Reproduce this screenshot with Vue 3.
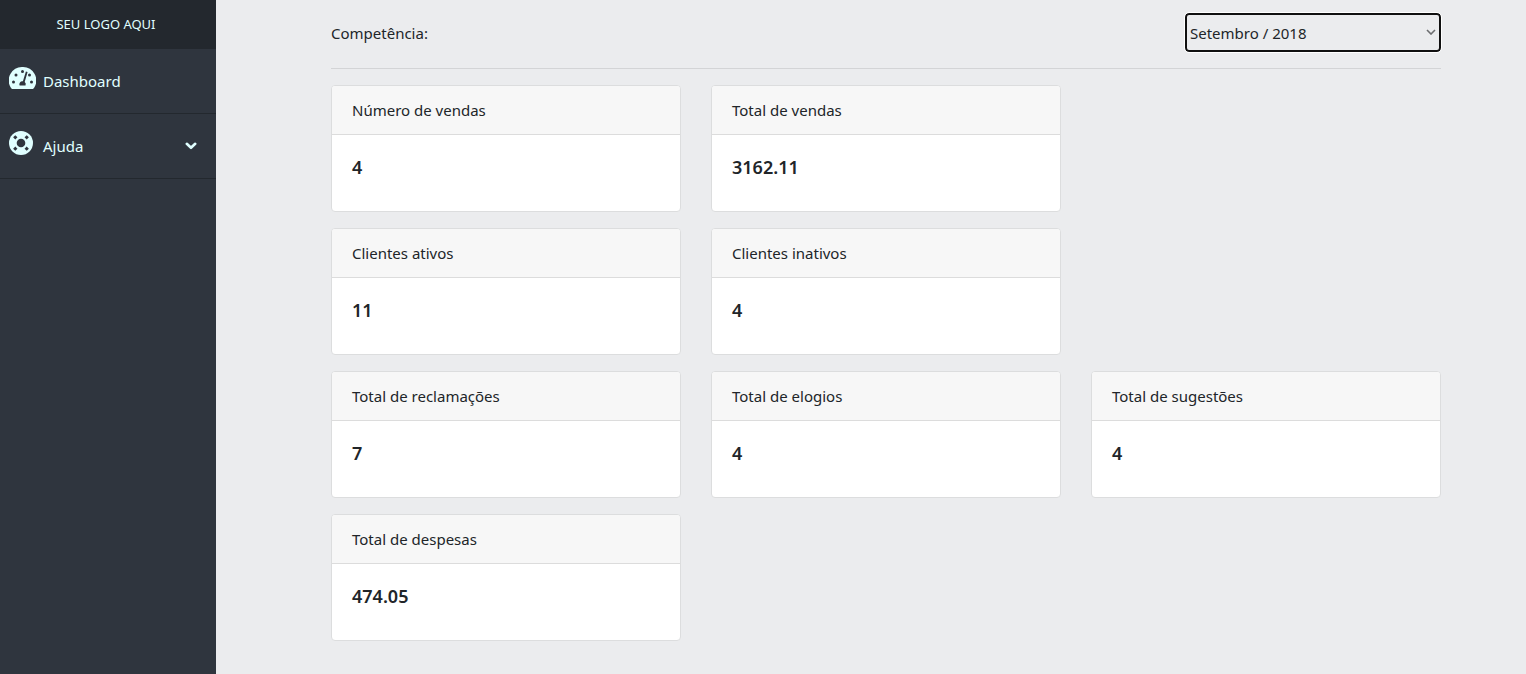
<script setup>
import { ref } from 'vue'

const period = ref('2018-09')
const periods = [{ value: '2018-09', label: 'Setembro / 2018' }]

const rows = [
  [
    { title: 'Número de vendas', value: '4' },
    { title: 'Total de vendas', value: '3162.11' }
  ],
  [
    { title: 'Clientes ativos', value: '11' },
    { title: 'Clientes inativos', value: '4' }
  ],
  [
    { title: 'Total de reclamações', value: '7' },
    { title: 'Total de elogios', value: '4' },
    { title: 'Total de sugestões', value: '4' }
  ],
  [{ title: 'Total de despesas', value: '474.05' }]
]
</script>

<template>
  <div class="layout">
    <aside class="sidebar">
      <div class="brand">SEU LOGO AQUI</div>
      <nav>
        <a class="item" href="#dashboard">
          <svg class="gauge" viewBox="0 0 27 22" aria-hidden="true">
            <path fill="#e0ffff" d="M13.500 0A13.500 13.500 0 0 0 1.700 20.500c.5.9 1 1.500 1.900 1.500h19.800c.9 0 1.400-.6 1.900-1.500A13.500 13.500 0 0 0 13.500 0z" />
            <g fill="#2f353e">
              <circle cx="4.500" cy="15" r="1.500" />
              <circle cx="7" cy="8" r="1.500" />
              <circle cx="13.500" cy="4.500" r="1.500" />
              <circle cx="20.500" cy="8" r="1.500" />
              <circle cx="22.500" cy="15" r="1.500" />
              <path d="M16.900 4.600l1.700.5-2.900 9.900a3 3 0 0 1 .8 3.500h-5.900a3 3 0 0 1 3.300-4.200z" />
            </g>
          </svg>
          <span>Dashboard</span>
        </a>
        <button class="item" type="button">
          <svg class="ring" viewBox="0 0 24 24" aria-hidden="true">
            <circle cx="12" cy="12" r="12" fill="#e0ffff" />
            <circle cx="12" cy="12" r="4.300" fill="#2f353e" />
            <g stroke="#2f353e" stroke-width="3">
              <path d="M5.200 5.200l2.200 2.200M18.800 5.200l-2.200 2.200M5.200 18.800l2.200-2.200M18.800 18.800l-2.200-2.200" />
            </g>
          </svg>
          <span>Ajuda</span>
          <svg class="chevron" viewBox="0 0 12 8" aria-hidden="true">
            <path d="M1.800 1.800L6 5.800l4.200-4" fill="none" stroke="#e0ffff" stroke-width="2.600" stroke-linecap="round" stroke-linejoin="round" />
          </svg>
        </button>
      </nav>
    </aside>

    <main class="content">
      <div class="container">
        <div class="filter">
          <label for="period">Competência:</label>
          <div class="select-wrap">
            <select id="period" v-model="period">
              <option v-for="p in periods" :key="p.value" :value="p.value">{{ p.label }}</option>
            </select>
            <svg class="caret" viewBox="0 0 10 6" aria-hidden="true">
              <path d="M1 1l4 4 4-4" fill="none" stroke="#6c6d6f" stroke-width="1.600" />
            </svg>
          </div>
        </div>
        <div v-for="(row, i) in rows" :key="i" class="row">
          <section v-for="card in row" :key="card.title" class="card">
            <header>{{ card.title }}</header>
            <h5>{{ card.value }}</h5>
          </section>
        </div>
      </div>
    </main>
  </div>
</template>

<style>
body {
  margin: 0;
  background: #ebecee;
}
</style>

<style scoped>
* {
  box-sizing: border-box;
}

.layout {
  display: flex;
  min-height: 100vh;
  font-family: "Segoe UI", "Noto Sans", sans-serif;
  font-size: 15px;
  line-height: 24px;
  color: #212529;
}

.sidebar {
  flex: 0 0 216px;
  background: #2f353e;
  color: #e0ffff;
}

.brand {
  height: 49px;
  padding-right: 4px;
  background: #23282e;
  font-size: 13px;
  line-height: 48px;
  text-align: center;
}

.item {
  display: flex;
  align-items: center;
  width: 100%;
  height: 65px;
  padding: 0 19px 0 9px;
  border: 0;
  border-bottom: 1px solid #23282e;
  background: none;
  color: inherit;
  font: inherit;
  text-decoration: none;
}

.gauge {
  width: 27px;
  height: 22px;
  margin-right: 7px;
  margin-bottom: 6px;
}

.ring {
  width: 24px;
  height: 24px;
  margin-right: 10px;
  margin-bottom: 6px;
}

.chevron {
  width: 12px;
  height: 8px;
  margin-left: auto;
}

.content {
  flex: 1;
  min-width: 0;
  padding: 13px 85px 16px 115px;
}

.container {
  max-width: 1110px;
  margin: 0 auto;
}

.filter {
  display: flex;
  align-items: center;
  justify-content: space-between;
  height: 56px;
  padding-bottom: 16px;
  margin-bottom: 16px;
  border-bottom: 1px solid #d3d4d6;
}

.select-wrap {
  position: relative;
  width: 256px;
}

select {
  display: block;
  width: 100%;
  height: 39px;
  padding: 0 20px 0 3px;
  border: 2px solid #101010;
  border-radius: 4px;
  outline: 1px solid #fff;
  background: #ebecee;
  color: #212529;
  font: inherit;
  appearance: none;
}

.caret {
  position: absolute;
  top: 16px;
  right: 5px;
  width: 10px;
  height: 6px;
  pointer-events: none;
}

.row {
  display: grid;
  grid-template-columns: repeat(3, minmax(0, 1fr));
  gap: 30px;
  margin-bottom: 16px;
}

.card {
  min-height: 127px;
  overflow: hidden;
  border: 1px solid #dcddde;
  border-radius: 4px;
  background: #fff;
}

.card header {
  padding: 12px 20px;
  border-bottom: 1px solid #dcdcdc;
  background: #f7f7f7;
}

.card h5 {
  margin: 0;
  padding: 20px;
  font-size: 18px;
  font-weight: 600;
}
</style>
